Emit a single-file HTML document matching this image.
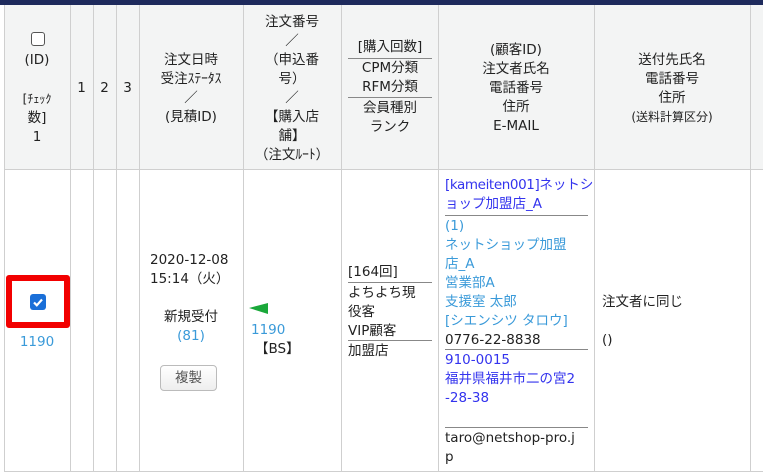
<!DOCTYPE html>
<html><head><meta charset="utf-8">
<style>
*{margin:0;padding:0;box-sizing:border-box}
body{width:763px;height:473px;overflow:hidden;background:#fff;font-family:"DejaVu Sans","Noto Sans CJK JP",sans-serif;font-size:13.5px;color:#222;position:relative}
.a{position:absolute;line-height:19px;white-space:nowrap}
.c{text-align:center}
.v{position:absolute;width:1px;background:#cfcfcf;top:5px;height:467px}
.h{position:absolute;height:1px;background:#888}
.lb{color:#3a9ad9}
.bl{color:#3333ee}
</style></head><body>
<div style="position:absolute;left:0;top:0;width:763px;height:5px;background:#1e2a5c"></div>
<div style="position:absolute;left:4px;top:5px;width:759px;height:165px;background:#f3f4f4"></div>
<div style="position:absolute;left:4px;top:169px;width:759px;height:1px;background:#cfcfcf"></div>
<div style="position:absolute;left:4px;top:471px;width:759px;height:1px;background:#cfcfcf"></div>
<div class="v" style="left:4px"></div><div class="v" style="left:70px"></div><div class="v" style="left:93px"></div><div class="v" style="left:116px"></div><div class="v" style="left:139px"></div><div class="v" style="left:243px"></div><div class="v" style="left:341px"></div><div class="v" style="left:438px"></div><div class="v" style="left:594px"></div><div class="v" style="left:750px"></div>

<!-- header -->
<div style="position:absolute;left:31px;top:32px;width:14px;height:14px;border:1px solid #555;border-radius:3px;background:#fff"></div>
<div class="a c" style="left:4px;width:66px;top:51px">(ID)</div>
<div class="a c" style="left:4px;width:66px;top:90px;font-size:12px">[ﾁｪｯｸ</div>
<div class="a c" style="left:4px;width:66px;top:109px">数]</div>
<div class="a c" style="left:4px;width:66px;top:128px">1</div>
<div class="a c" style="left:70px;width:23px;top:79px">1</div>
<div class="a c" style="left:93px;width:23px;top:79px">2</div>
<div class="a c" style="left:116px;width:23px;top:79px">3</div>
<div class="a c" style="left:139px;width:104px;top:51px">注文日時<br>受注ｽﾃｰﾀｽ<br>／<br>(見積ID)</div>
<div class="a c" style="left:243px;width:98px;top:13px">注文番号<br>／<br>（申込番<br>号）<br>／<br>【購入店<br>舗】<br>（注文ﾙｰﾄ）</div>
<div class="a c" style="left:348px;width:84px;top:38px">[購入回数]</div>
<div class="h" style="left:348px;width:84px;top:58px"></div>
<div class="a c" style="left:348px;width:84px;top:59px">CPM分類<br>RFM分類</div>
<div class="h" style="left:348px;width:84px;top:97px"></div>
<div class="a c" style="left:348px;width:84px;top:99px">会員種別<br>ランク</div>
<div class="a c" style="left:438px;width:156px;top:41px">(顧客ID)<br>注文者氏名<br>電話番号<br>住所<br>E-MAIL</div>
<div class="a c" style="left:594px;width:156px;top:51px">送付先氏名<br>電話番号<br>住所<br><span style="font-size:12px">(送料計算区分)</span></div>

<!-- body -->
<div style="position:absolute;left:6px;top:275px;width:64px;height:53px;border:6px solid #f20000;border-radius:3px;background:#fff"></div>
<div style="position:absolute;left:30px;top:294px;width:16px;height:16px;background:#1a6fd8;border-radius:3px"><svg width="16" height="16"><path d="M4 8.5l2.8 2.8L12 5.5" stroke="#fff" stroke-width="2.2" fill="none"/></svg></div>
<div class="a c lb" style="left:4px;width:66px;top:333px">1190</div>

<div class="a" style="left:150px;top:251px">2020-12-08<br>15:14（火）</div>
<div class="a c" style="left:139px;width:104px;top:308px">新規受付<br><span class="lb">(81)</span></div>
<div style="position:absolute;left:160px;top:365px;width:57px;height:26px;border:1px solid #bbb;border-radius:4px;background:linear-gradient(#fff,#eee);text-align:center;line-height:24px;color:#555">複製</div>

<svg style="position:absolute;left:249px;top:303px" width="20" height="11"><polygon points="0,5 19,0 19,11" fill="#1aa83a"/></svg>
<div class="a lb" style="left:251px;top:321px">1190</div>
<div class="a" style="left:255px;top:340px">【BS】</div>

<div class="a" style="left:348px;top:263px">[164回]</div>
<div class="h" style="left:348px;width:84px;top:282px"></div>
<div class="a" style="left:348px;top:284px">よちよち現<br>役客<br>VIP顧客</div>
<div class="h" style="left:348px;width:84px;top:340px"></div>
<div class="a" style="left:348px;top:342px">加盟店</div>

<div class="a bl" style="left:445px;top:176px"><span style="letter-spacing:-0.4px">[kameiten001]</span>ネットシ<br>ョップ加盟店_A</div>
<div class="h" style="left:445px;width:143px;top:215px"></div>
<div class="a lb" style="left:445px;top:217px">(1)<br>ネットショップ加盟<br>店_A<br>営業部A<br>支援室 太郎<br>[シエンシツ タロウ]</div>
<div class="a" style="left:445px;top:331px">0776-22-8838</div>
<div class="h" style="left:445px;width:143px;top:349px"></div>
<div class="a bl" style="left:445px;top:351px">910-0015<br>福井県福井市二の宮2<br>-28-38</div>
<div class="h" style="left:445px;width:143px;top:427px"></div>
<div class="a" style="left:445px;top:429px">taro@netshop-pro.j<br>p</div>

<div class="a" style="left:602px;top:293px">注文者に同じ</div>
<div class="a" style="left:602px;top:331px">()</div>
</body></html>
